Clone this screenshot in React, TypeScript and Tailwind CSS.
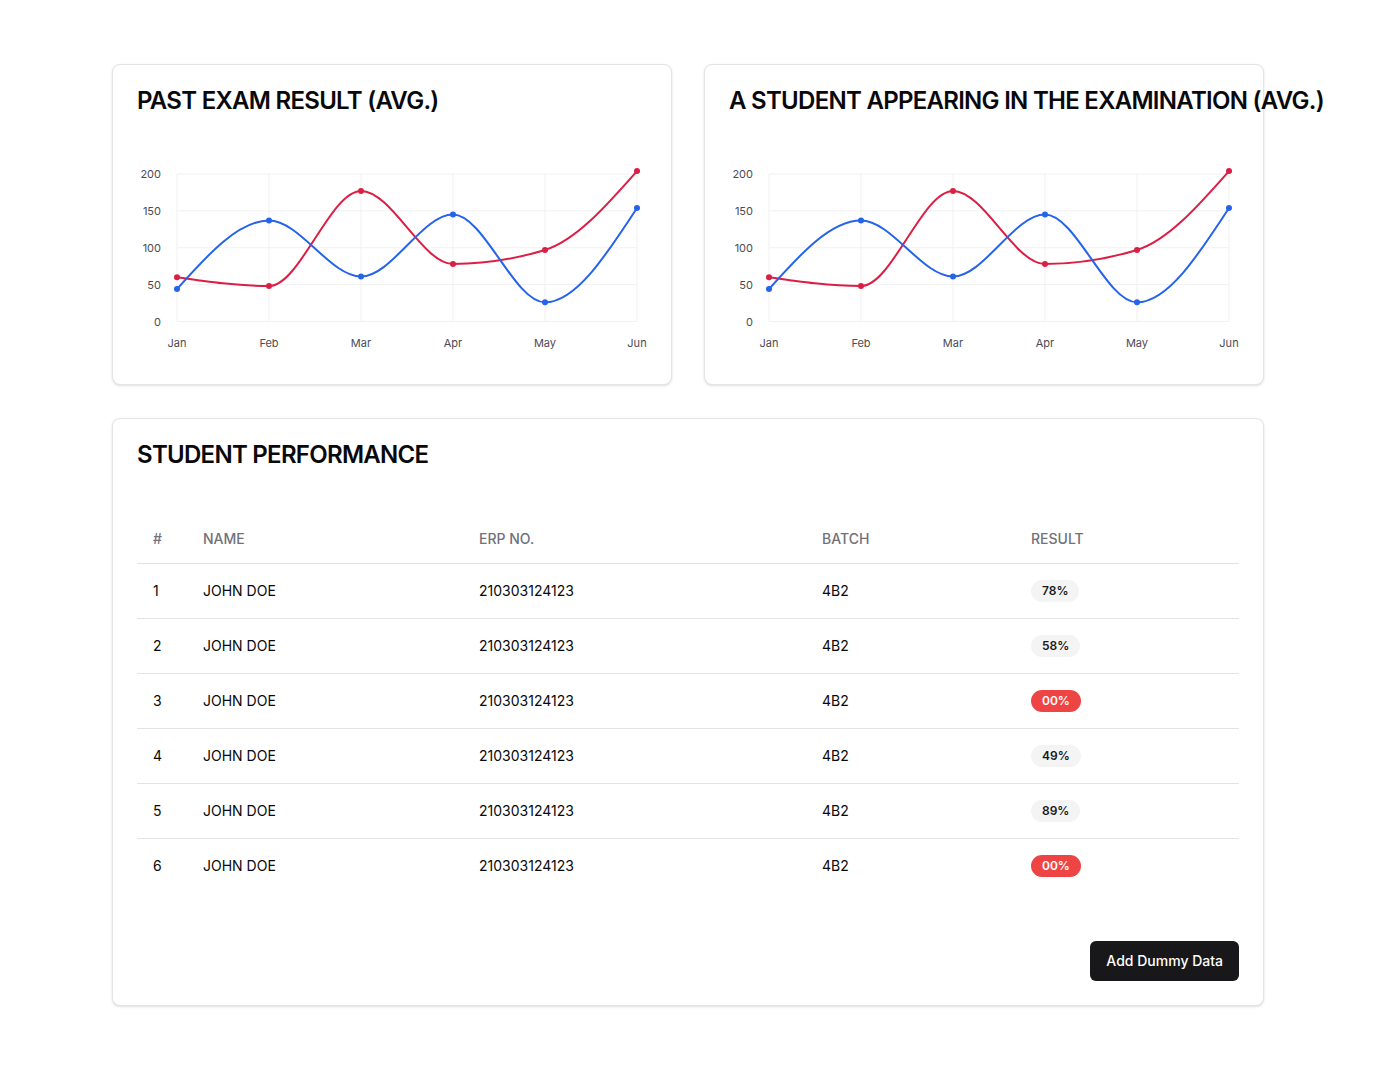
import React from "react";

type Pt = [number, number];

function sign(x: number) {
  return x < 0 ? -1 : 1;
}

function monotonePath(pts: Pt[]): string {
  const n = pts.length;
  const t: number[] = new Array(n).fill(0);
  for (let i = 1; i < n - 1; i++) {
    const [x0, y0] = pts[i - 1];
    const [x1, y1] = pts[i];
    const [x2, y2] = pts[i + 1];
    const h0 = x1 - x0;
    const h1 = x2 - x1;
    const s0 = (y1 - y0) / h0;
    const s1 = (y2 - y1) / h1;
    const p = (s0 * h1 + s1 * h0) / (h0 + h1);
    t[i] = (sign(s0) + sign(s1)) * Math.min(Math.abs(s0), Math.abs(s1), 0.5 * Math.abs(p)) || 0;
  }
  {
    const h = pts[1][0] - pts[0][0];
    t[0] = (3 * (pts[1][1] - pts[0][1]) / h - t[1]) / 2;
    const h2 = pts[n - 1][0] - pts[n - 2][0];
    t[n - 1] = (3 * (pts[n - 1][1] - pts[n - 2][1]) / h2 - t[n - 2]) / 2;
  }
  let d = `M${pts[0][0]},${pts[0][1]}`;
  for (let i = 0; i < n - 1; i++) {
    const [x0, y0] = pts[i];
    const [x1, y1] = pts[i + 1];
    const dx = (x1 - x0) / 3;
    d += ` C${x0 + dx},${y0 + dx * t[i]} ${x1 - dx},${y1 - dx * t[i + 1]} ${x1},${y1}`;
  }
  return d;
}

const months = ["Jan", "Feb", "Mar", "Apr", "May", "Jun"];
const blue = [44, 137, 61, 145, 26, 154];
const red = [60, 48, 177, 78, 97, 204];

function Chart() {
  const x0 = 40;
  const step = 92;
  const yTop = 37;
  const yBot = 184.5;
  const sy = (v: number) => yBot - (v * (yBot - yTop)) / 200;
  const sx = (i: number) => x0 + i * step;
  const bluePts: Pt[] = blue.map((v, i) => [sx(i), sy(v)]);
  const redPts: Pt[] = red.map((v, i) => [sx(i), sy(v)]);
  const ticks = [0, 50, 100, 150, 200];
  return (
    <svg width={510} height={225} className="block">
      {ticks.map((t) => (
        <line key={t} x1={x0} x2={sx(5)} y1={sy(t)} y2={sy(t)} stroke="#f1f1f3" strokeWidth={1} />
      ))}
      {months.map((m, i) => (
        <line key={m} x1={sx(i)} x2={sx(i)} y1={yTop} y2={yBot} stroke="#f1f1f3" strokeWidth={1} />
      ))}
      {ticks.map((t) => (
        <text
          key={t}
          x={24}
          y={sy(t)}
          textAnchor="end"
          dominantBaseline="central"
          fontSize={11}
          fill="#4b4b55"
          fontFamily="Inter, sans-serif"
        >
          {t}
        </text>
      ))}
      {months.map((m, i) => (
        <text
          key={m}
          x={sx(i)}
          y={206}
          textAnchor="middle"
          dominantBaseline="central"
          fontSize={11}
          fill="#4b4b55"
          fontFamily="Inter, sans-serif"
        >
          {m}
        </text>
      ))}
      <path d={monotonePath(redPts)} fill="none" stroke="#dc1e45" strokeWidth={2} />
      <path d={monotonePath(bluePts)} fill="none" stroke="#2563eb" strokeWidth={2} />
      {redPts.map(([x, y], i) => (
        <circle key={"r" + i} cx={x} cy={y} r={3} fill="#dc1e45" />
      ))}
      {bluePts.map(([x, y], i) => (
        <circle key={"b" + i} cx={x} cy={y} r={3} fill="#2563eb" />
      ))}
    </svg>
  );
}

function ChartCard({ title }: { title: string }) {
  return (
    <div className="rounded-lg border border-[#e4e4e7] bg-white shadow-sm">
      <div className="p-6">
        <h3 className="whitespace-nowrap text-2xl font-semibold leading-none tracking-[-0.03em] text-[#09090b]">
          {title}
        </h3>
      </div>
      <div className="px-6 pb-[22px]">
        <Chart />
      </div>
    </div>
  );
}

const rows = [
  { id: 1, result: "78%", fail: false },
  { id: 2, result: "58%", fail: false },
  { id: 3, result: "00%", fail: true },
  { id: 4, result: "49%", fail: false },
  { id: 5, result: "89%", fail: false },
  { id: 6, result: "00%", fail: true },
];

export default function App() {
  return (
    <div
      className="min-h-screen bg-white py-16"
      style={{ fontFamily: "Inter, 'Liberation Sans', sans-serif" }}
    >
      <div className="mx-auto w-[1152px]">
        <div className="grid grid-cols-2 gap-8">
          <ChartCard title="PAST EXAM RESULT (AVG.)" />
          <ChartCard title="A STUDENT APPEARING IN THE EXAMINATION (AVG.)" />
        </div>
        <div className="mt-[33px] rounded-lg border border-[#e4e4e7] bg-white shadow-sm">
          <div className="p-6">
            <h3 className="text-2xl font-semibold leading-none tracking-[-0.03em] text-[#09090b]">
              STUDENT PERFORMANCE
            </h3>
          </div>
          <div className="px-6 pt-6">
            <table className="w-full table-fixed border-collapse text-sm">
              <thead>
                <tr className="h-12 border-b border-[#e4e4e7]">
                  <th className="w-[50px] px-4 text-left font-medium text-[#71717a]">#</th>
                  <th className="w-[276px] px-4 text-left font-medium text-[#71717a]">NAME</th>
                  <th className="w-[343px] px-4 text-left font-medium text-[#71717a]">ERP NO.</th>
                  <th className="w-[209px] px-4 text-left font-medium text-[#71717a]">BATCH</th>
                  <th className="px-4 text-left font-medium text-[#71717a]">RESULT</th>
                </tr>
              </thead>
              <tbody>
                {rows.map((r, i) => (
                  <tr
                    key={r.id}
                    className={
                      i < rows.length - 1 ? "h-[55px] border-b border-[#e4e4e7]" : "h-[55px]"
                    }
                  >
                    <td className="px-4 text-[#09090b]">{r.id}</td>
                    <td className="px-4 text-[#09090b]">JOHN DOE</td>
                    <td className="px-4 text-[#09090b]">210303124123</td>
                    <td className="px-4 text-[#09090b]">4B2</td>
                    <td className="px-4">
                      <span
                        className={
                          r.fail
                            ? "inline-flex items-center rounded-full border border-transparent bg-[#ef4444] px-2.5 py-0.5 text-xs font-semibold text-white"
                            : "inline-flex items-center rounded-full border border-transparent bg-[#f4f4f5] px-2.5 py-0.5 text-xs font-semibold text-[#18181b]"
                        }
                      >
                        {r.result}
                      </span>
                    </td>
                  </tr>
                ))}
              </tbody>
            </table>
          </div>
          <div className="flex justify-end p-6 pt-12">
            <button className="inline-flex h-10 items-center justify-center rounded-md bg-[#18181b] px-4 text-sm font-medium text-white">
              Add Dummy Data
            </button>
          </div>
        </div>
      </div>
    </div>
  );
}
